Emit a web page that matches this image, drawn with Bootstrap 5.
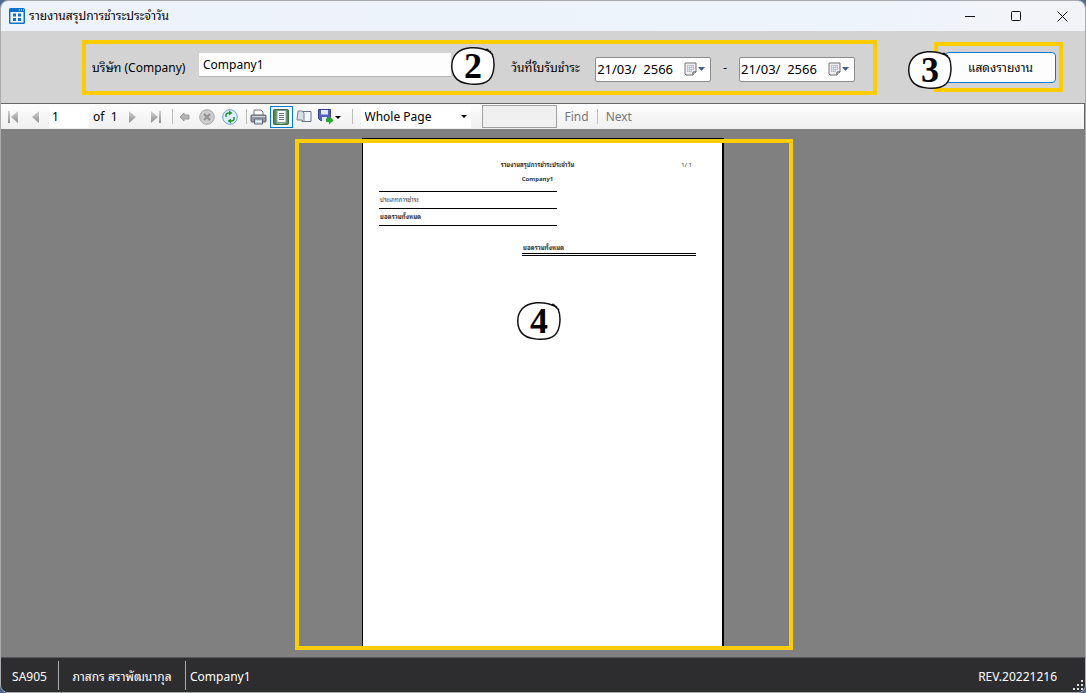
<!DOCTYPE html>
<html lang="th">
<head>
<meta charset="utf-8">
<meta name="viewport" content="width=device-width, initial-scale=1">
<title>รายงานสรุปการชำระประจำวัน</title>
<link href="https://cdn.jsdelivr.net/npm/bootstrap@5.3.0/dist/css/bootstrap.min.css" rel="stylesheet">
<style>
  body { font: 12px/16px "Noto Sans", "Noto Sans Thai Looped", "Loma", "Waree", "Garuda", "Noto Serif Thai", sans-serif; color: #000; background: #4f6a92; overflow: hidden; }
  button { border: 0; padding: 0; background: none; color: inherit; }
  svg { display: block; flex: none; }
  .win { border: 1px solid #a9abae; border-radius: 8px; overflow: hidden; }
  .titlebar { height: 30px; padding-left: 8px; background: linear-gradient(90deg, #edf2fb, #eef4fb 80%, #f3f3f7); }
  .titlebar button { width: 46px; height: 30px; display: grid; place-items: center; }
  .thai { font-size: 12px; }
  .filters { height: 72px; background: #d3d3d3; padding: 9px 22px 0 81px; }
  .mark-frame { border: 4px solid #fc0; position: relative; }
  .filter-frame { height: 55px; padding: 0 18px 0 6px; flex: 1 1 auto; margin-right: 57px; }
  .run-frame { width: 129px; height: 50px; margin-top: 2px; padding: 6px 3px 5px 7px; }
  .run-btn { width: 100%; height: 31px; background: #fdfdfd; border: 1px solid #0078d4; border-radius: 4px; }
  .colabel { width: 107px; }
  .datelabel { width: 84px; }
  .company { height: 24px; border: 0; border-bottom: 1px solid #b4b4b4; background: #fdfdfd; padding: 0 4px; min-width: 0; margin: 0 60px 6px 0; flex: 1 1 auto; }
  .datebox { width: 116px; height: 25px; background: #fff; border: 1px solid #8c8c8c; border-radius: 2px; margin-top: 3px; }
  .datebox input { border: 0; background: none; padding: 0 0 0 1px; width: 88px; height: 22px; min-width: 0; font-size: 13px; }
  .step { position: absolute; width: 44px; height: 40px; display: grid; place-items: center; font: bold 36px/36px "Liberation Serif", serif; }
  .step svg { position: absolute; inset: 0; }
  .step span { position: relative; }
  .step-2 { left: 365px; top: 2px; }
  .step-3 { left: -30px; top: 4px; }
  .step-4 { left: 222px; top: 163px; }
  .tools { height: 26px; background: linear-gradient(#fdfdfd, #f0f0f0); border: solid #666; border-width: 1px 1px 0 0; }
  .tools button { height: 22px; width: 23px; display: grid; place-items: center; }
  .tools .split { width: 28px; }
  .pageno { width: 40px; height: 22px; border: 0; background: #fff; padding: 0 3px; margin-left: 2px; }
  .zoomsel { appearance: none; width: 110px; height: 22px; border: 0; padding: 0 4px; background: #fff; color: #000; }
  .zoomwrap svg { position: absolute; right: 4px; top: 9px; pointer-events: none; }
  .findbox { width: 75px; height: 23px; background: #f0f0f0; border: 1px solid #a0a0a0; margin-left: 11px; }
  .bar { width: 1px; height: 15px; background: #bdbdbd; }
  .tools .active { background: #f2f8fd; border: 1px solid #0078d4; }
  .tools .word { width: auto; color: #767676; }
  .viewer { background: #808080; padding: 9px 0 11px; }
  .stage { width: 498px; margin-left: 2px; padding: 0 67px; }
  .stage-frame { position: absolute; inset: 1px 0 -4px; pointer-events: none; }
  .paper { width: 362px; background: #fff; border: solid #000; border-width: 1px 2px 0 1px; padding: 21px 26px 0 16px; }
  .paper, .paper table { font-size: 6px; line-height: 10px; color: #333; }
  .paper-head { display: grid; grid-template-columns: 1fr auto 1fr; height: 10px; }
  .sum { width: 178px; margin-top: 7px; }
  .sum td { height: 17px; padding: 0 0 0 1px; border: solid #000; border-width: 1px 0; }
  .total { width: 174px; height: 13px; margin: 17px 0 0 auto; border-bottom: 3px double #000; padding-left: 1px; }
  .status { height: 35px; background: #2d2d30; color: #fff; border-top: 1px solid #55565a; }
  .status span { padding-top: 3px; }
  .cellb { border-right: 1px solid #aaa; height: 29px; display: flex; align-items: center; justify-content: center; }
  .code-cell { width: 58px; }
  .user-cell { width: 127px; }
</style>
</head>
<body>
<svg width="0" height="0" class="position-absolute">
  <defs>
    <linearGradient id="g" x2="0" y2="1"><stop stop-color="#d2d2d2"/><stop offset="1" stop-color="#8e8e8e"/></linearGradient>
    <linearGradient id="gr"><stop stop-color="#3c7d40"/><stop offset=".5" stop-color="#a9cfa5"/><stop offset="1" stop-color="#3c7d40"/></linearGradient>
    <symbol id="ring" viewBox="0 0 44 40">
      <path d="M37 4C25-1 11 1 5 8-1 15 0 25 4 31c5 8 26 10 34 3 6-6 6-21 3-26Z" fill="#fff"/>
      <path d="M40 6C26-1 11 1 5 8-1 15 0 25 4 31c5 8 26 10 34 3 6-6 6-20 3-26l-6-5m1 0 6 6" fill="none" stroke="#111" stroke-width="1.500"/>
    </symbol>
    <symbol id="cal" viewBox="0 0 22 14">
      <path d="M1 1h11v9l-3 3H2l-1-1z" fill="#eef0f5" stroke="#77706f"/>
      <path d="M12 10H9v3" fill="#fff" stroke="#554c4b"/>
      <path d="M3 3.500h7M3 5.500h7M3 7.500h7M3 9.500h5M3.500 3v7M5.500 3v7M7.500 3v7M9.500 3v5" stroke="#a9afc6" fill="none" stroke-width=".6"/>
      <path d="M14 5h7l-3.500 4z" fill="#3f5f93"/>
    </symbol>
  </defs>
</svg>
<div class="win vh-100 d-flex flex-column">
  <header class="titlebar d-flex align-items-center">
    <svg width="16" height="16"><rect width="16" height="16" rx="1.500" fill="#0a70c9"/><rect x="1.500" y="4" width="13" height="10.500" fill="#f4faff"/><path d="M10 2h1M12 2h1M14 2h1" stroke="#fff"/><path d="M4 5.500h3v3H4zm5 0h3v3H9zM4 10h3v3H4zm5 0h3v3H9z" fill="#0a70c9"/></svg>
    <span class="thai ms-1 me-auto">รายงานสรุปการชำระประจำวัน</span>
    <button aria-label="Minimize"><svg width="10" height="10"><path d="M0 5.500h10" stroke="#111"/></svg></button>
    <button aria-label="Maximize"><svg width="10" height="10"><rect x=".5" y=".5" width="9" height="9" rx="1" fill="none" stroke="#111"/></svg></button>
    <button aria-label="Close"><svg width="11" height="11"><path d="M.5.500l10 10M10.500.500l-10 10" stroke="#111"/></svg></button>
  </header>
  <section class="filters d-flex align-items-start">
    <div class="mark-frame filter-frame d-flex align-items-center">
      <label for="co" class="thai colabel">บริษัท (Company)</label>
      <input id="co" class="company" value="Company1">
      <div class="step step-2"><svg width="44" height="40"><use href="#ring"/></svg><span>2</span></div>
      <label for="d1" class="thai datelabel">วันที่ใบรับชำระ</label>
      <div class="datebox d-flex align-items-center"><input id="d1" value="21/03/  2566"><button aria-label="Calendar"><svg width="22" height="14"><use href="#cal"/></svg></button></div>
      <label for="d2" class="px-2 mx-1">-</label>
      <div class="datebox d-flex align-items-center"><input id="d2" value="21/03/  2566"><button aria-label="Calendar"><svg width="22" height="14"><use href="#cal"/></svg></button></div>
    </div>
    <div class="mark-frame run-frame">
      <button class="run-btn thai">แสดงรายงาน</button>
      <div class="step step-3"><svg width="44" height="40"><use href="#ring"/></svg><span>3</span></div>
    </div>
  </section>
  <nav class="tools d-flex align-items-center">
    <button aria-label="First"><svg width="14" height="14"><path d="M2 1h2v12H2zM12 1v12L5 7z" fill="url(#g)"/></svg></button>
    <button aria-label="Previous"><svg width="12" height="14"><path d="M9 1v12L2 7z" fill="url(#g)"/></svg></button>
    <input class="pageno" value="1" aria-label="Page">
    <span class="ms-1">of&nbsp; 1</span>
    <button aria-label="Next page" class="ms-1"><svg width="12" height="14"><path d="M2 1v12l7-6z" fill="url(#g)"/></svg></button>
    <button aria-label="Last"><svg width="14" height="14"><path d="M10 1h2v12h-2zM2 1v12l7-6z" fill="url(#g)"/></svg></button>
    <i class="bar ms-1"></i>
    <button aria-label="Back"><svg width="11" height="10"><path d="M1 5l4-4v2h5v4H5v2z" fill="#b4b4b4" stroke="#999"/></svg></button>
    <button aria-label="Stop"><svg width="16" height="16"><circle cx="8" cy="8" r="7.300" fill="#ccc" stroke="#aaa"/><path d="M5 5l6 6M11 5l-6 6" stroke="#929292" stroke-width="2"/></svg></button>
    <button aria-label="Refresh"><svg width="16" height="16"><circle cx="8" cy="8" r="7.300" fill="#e2effc" stroke="#6ba2dc"/><path d="M4 8V6q0-2 3-2m5 4v2q0 2-3 2" fill="none" stroke="#209a27" stroke-width="1.500"/><path d="M7 1.500l3.500 2.500L7 6.500zM9 9.500L5.500 12 9 14.500z" fill="#209a27"/></svg></button>
    <i class="bar ms-1"></i>
    <button aria-label="Print"><svg width="17" height="16"><path d="M4 6V1h7l2 2v3" fill="#fff" stroke="#777"/><rect x="1" y="6" width="15" height="7" rx="1" fill="#969aa0" stroke="#5d6166"/><path d="M2 7.500h13" stroke="#d5d7dc"/><path d="M4.500 10h8v5h-8z" fill="#bee0fa" stroke="#667"/><path d="M6 12.500h5" stroke="#fff"/></svg></button>
    <button class="active" aria-label="Layout"><svg width="16" height="16"><rect x=".5" y=".5" width="15" height="15" rx="1" fill="url(#gr)" stroke="#39703b"/><path d="M4 1.500h9v12H4z" fill="#fff" stroke="#8a94a8"/><path d="M6 4.500h5M6 6.500h5M6 8.500h5M6 10.500h5" stroke="#5f6e8c"/></svg></button>
    <button aria-label="Page setup"><svg width="16" height="14"><path d="M6 1.500h9v10H6z" fill="#f1f5fd" stroke="#66708a"/><path d="M2 1h4l2 2v9L6 10H1z" fill="#d9dee6" stroke="#7c8493"/></svg></button>
    <button aria-label="Export" class="split"><svg width="23" height="16"><path d="M.5.500h12v11h-10l-2-2z" fill="#5360c0" stroke="#34408c"/><path d="M3 1h7v4.500H3zM4 8h5v4H4z" fill="#e4e9f8"/><path d="M8 9.500h3V6.500l4.500 5-4.500 4v-2.500H8z" fill="#20ad25"/><path d="M17 7h6l-3 3z"/></svg></button>
    <i class="bar mx-2"></i>
    <div class="zoomwrap position-relative"><select class="zoomsel" aria-label="Zoom"><option>Whole Page</option></select><svg width="6" height="4"><path d="M0 0h6L3 3z"/></svg></div>
    <input class="findbox me-2" aria-label="Find text">
    <button class="word">Find</button><i class="bar mx-2"></i><button class="word">Next</button>
  </nav>
  <main class="viewer flex-grow-1 d-flex justify-content-center">
    <div class="stage position-relative d-flex flex-shrink-0">
      <article class="paper">
        <div class="paper-head"><span></span><b>รายงานสรุปการชำระประจำวัน</b><span class="text-end pe-1">1/ 1</span></div>
        <div class="text-center fw-bold mt-1">Company1</div>
        <table class="sum"><tr><td>ประเภทการชำระ</td></tr><tr><td><b>ยอดรวมทั้งหมด</b></td></tr></table>
        <div class="total"><b>ยอดรวมทั้งหมด</b></div>
      </article>
      <div class="mark-frame stage-frame"></div>
      <div class="step step-4"><svg width="44" height="40"><use href="#ring"/></svg><span>4</span></div>
    </div>
  </main>
  <footer class="status d-flex align-items-center">
    <span class="cellb code-cell">SA905</span><span class="cellb user-cell thai">ภาสกร สราพัฒนากุล</span><span class="ms-1 me-auto">Company1</span>
    <span class="me-3">REV.20221216</span>
    <svg width="12" height="12" class="align-self-end"><path d="M8 0h2v2H8zM4 4h2v2H4zm4 0h2v2H8zM0 8h2v2H0zm4 0h2v2H4zm4 0h2v2H8z" fill="#ddd"/></svg>
  </footer>
</div>
<script src="https://cdn.jsdelivr.net/npm/bootstrap@5.3.0/dist/js/bootstrap.bundle.min.js"></script>
</body>
</html>
